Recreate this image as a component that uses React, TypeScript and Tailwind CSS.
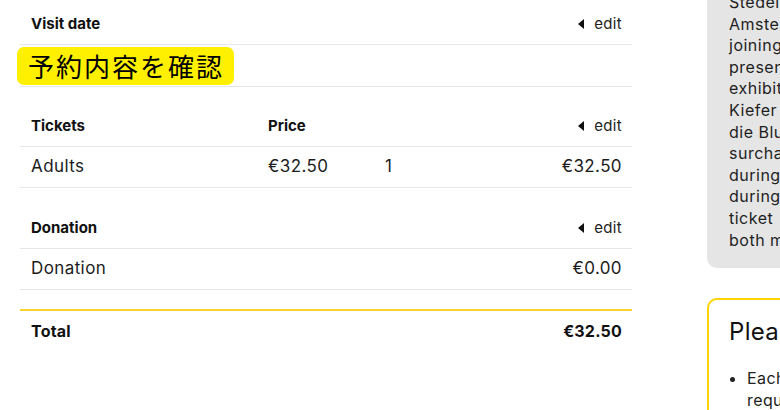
import React from 'react';

const EditLink = () => (
  <span className="ml-auto flex items-center gap-[10px] text-[15px] font-normal tracking-[0.3px] text-[#222]">
    <svg width="6" height="10" viewBox="0 0 6 10" className="shrink-0">
      <polygon points="6,0 6,10 0,5" fill="#111" />
    </svg>
    edit
  </span>
);

const noticeLines = [
  'Stedelijk Museum',
  'Amsterdam is',
  'joining forces with',
  'presenting the',
  'exhibition Anselm',
  'Kiefer  - Sag mir wo',
  'die Blumen sind. A',
  'surcharge applies',
  'during opening hours',
  'during the exhibition',
  'ticket  is valid for',
  'both museums.',
];

const App = () => {
  return (
    <div className="w-[780px] h-[410px] overflow-hidden bg-white flex font-['Inter','Liberation_Sans',sans-serif] text-[#1c1c1c]">
      {/* order summary */}
      <div className="ml-[20px] w-[612px] shrink-0 flex flex-col">
        <div className="h-[45px] pt-[4px] pl-[11px] pr-[10px] flex items-center border-b border-[#e6e6e6]">
          <span className="text-[15px] font-bold text-[#111]">Visit date</span>
          <EditLink />
        </div>
        <div className="h-[42px] flex items-center border-b border-[#e6e6e6]">
          <span className="-ml-[3px] h-[38px] flex items-center pl-[11px] pr-[10px] rounded-[7px] bg-[#fff000] text-[26px] tracking-[2px] text-black font-['Noto_Sans_CJK_JP',sans-serif]">
            予約内容を確認
          </span>
        </div>

        <div className="h-[60px] pt-[19px] pl-[11px] pr-[10px] flex items-center border-b border-[#e6e6e6] text-[15px] font-bold text-[#111]">
          <span className="w-[237px]">Tickets</span>
          <span>Price</span>
          <EditLink />
        </div>
        <div className="h-[41px] pl-[11px] pr-[10px] flex items-center border-b border-[#e6e6e6] text-[17px] tracking-[0.4px]">
          <span className="w-[237px]">Adults</span>
          <span className="w-[117px]">€32.50</span>
          <span>1</span>
          <span className="ml-auto">€32.50</span>
        </div>

        <div className="h-[61px] pt-[20px] pl-[11px] pr-[10px] flex items-center border-b border-[#e6e6e6] text-[15px] font-bold text-[#111]">
          <span>Donation</span>
          <EditLink />
        </div>
        <div className="h-[41px] pl-[11px] pr-[10px] flex items-center border-b border-[#e6e6e6] text-[17px] tracking-[0.4px]">
          <span>Donation</span>
          <span className="ml-auto">€0.00</span>
        </div>

        <div className="mt-[19px] h-[2px] bg-[#fcd22c]" />
        <div className="h-[40px] pl-[11px] pr-[10px] flex items-center text-[16px] font-bold tracking-[0.2px] text-[#111]">
          <span>Total</span>
          <span className="ml-auto">€32.50</span>
        </div>
      </div>

      {/* sidebar */}
      <div className="ml-[75px] w-[320px] shrink-0 flex flex-col">
        <div className="-mt-[30px] pt-[22px] pb-[17px] px-[22px] rounded-[10px] bg-[#e5e5e5] text-[16px] leading-[21.6px] tracking-[0.5px] text-[#1e1e1e]">
          {noticeLines.map((line, i) => (
            <span key={i} className="block whitespace-pre">
              {line}
            </span>
          ))}
        </div>

        <div className="mt-[30px] pt-[18px] px-[20px] pb-[20px] rounded-[10px] border-2 border-[#ffd400]">
          <h2 className="text-[24px] leading-[28px] tracking-[0.3px] text-[#111]">Please note</h2>
          <ul className="mt-[21px] pl-[18px] list-disc text-[16px] leading-[22px] tracking-[0.4px] text-[#222]">
            <li>Each visitor, also children, requires a ticket</li>
          </ul>
        </div>
      </div>
    </div>
  );
};

export default App;
